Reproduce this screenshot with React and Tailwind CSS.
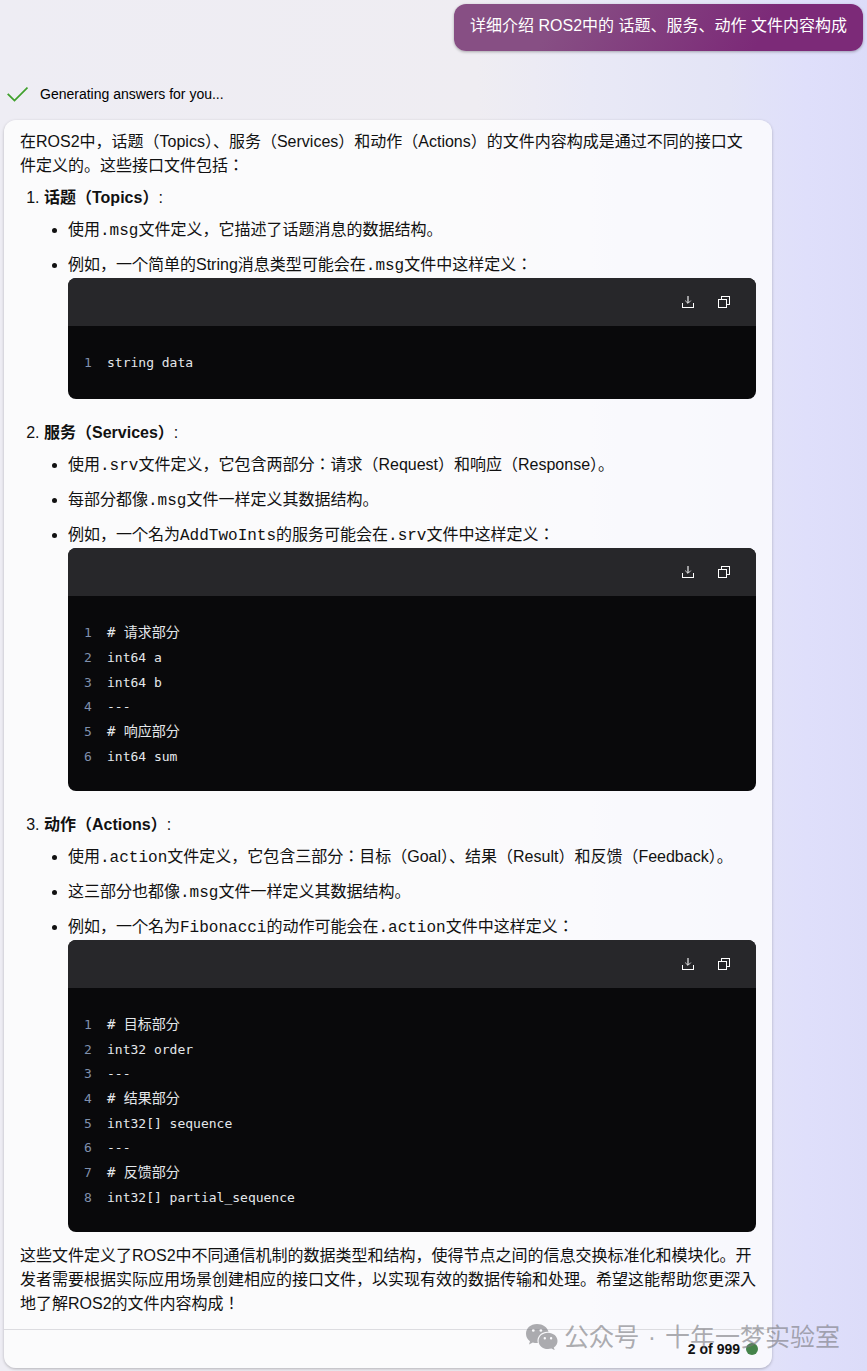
import React from 'react';

const sections = [
  {
    title: '话题（Topics）',
    items: [
      ['使用', '.msg', '文件定义，它描述了话题消息的数据结构。'],
      ['例如，一个简单的String消息类型可能会在', '.msg', '文件中这样定义：'],
    ],
    lines: ['string data'],
  },
  {
    title: '服务（Services）',
    items: [
      ['使用', '.srv', '文件定义，它包含两部分：请求（Request）和响应（Response）。'],
      ['每部分都像', '.msg', '文件一样定义其数据结构。'],
      ['例如，一个名为', 'AddTwoInts', '的服务可能会在', '.srv', '文件中这样定义：'],
    ],
    lines: ['# 请求部分', 'int64 a', 'int64 b', '---', '# 响应部分', 'int64 sum'],
  },
  {
    title: '动作（Actions）',
    items: [
      ['使用', '.action', '文件定义，它包含三部分：目标（Goal）、结果（Result）和反馈（Feedback）。'],
      ['这三部分也都像', '.msg', '文件一样定义其数据结构。'],
      ['例如，一个名为', 'Fibonacci', '的动作可能会在', '.action', '文件中这样定义：'],
    ],
    lines: [
      '# 目标部分',
      'int32 order',
      '---',
      '# 结果部分',
      'int32[] sequence',
      '---',
      '# 反馈部分',
      'int32[] partial_sequence',
    ],
  },
];

const lineClass = (line) => {
  if (line.startsWith('#')) return 'text-[14px] leading-[25px]';
  if (line === '---') return 'text-[13px] leading-[24px]';
  return 'text-[13px] leading-[25px]';
};

function DownloadIcon() {
  return (
    <svg width="12" height="12" viewBox="0 0 12 12" fill="none" stroke="currentColor" shapeRendering="crispEdges">
      <path d="M0.5 7V11.5H11.5V7" />
      <path d="M6 0V7" strokeWidth="2" opacity="0.55" />
      <path d="M3.2 4.6L6 7.4L8.8 4.6" shapeRendering="auto" opacity="0.8" />
    </svg>
  );
}

function CopyIcon() {
  return (
    <svg width="12" height="12" viewBox="0 0 12 12" fill="none" stroke="currentColor" shapeRendering="crispEdges">
      <path d="M0.5 3.5H8.5V11.5H0.5Z" />
      <path d="M3.5 3.5V0.5H11.5V8.5H8.5" />
    </svg>
  );
}

function CodeBlock({ lines }) {
  return (
    <div className="rounded-lg overflow-hidden bg-[#09090b] text-[#e4e7ea]">
      <div className="flex items-center justify-end h-12 px-3.5 bg-[#27272a] text-white">
        <button className="flex items-center justify-center w-9 h-9 cursor-pointer" aria-label="Download">
          <DownloadIcon />
        </button>
        <button className="flex items-center justify-center w-9 h-9 cursor-pointer" aria-label="Copy">
          <CopyIcon />
        </button>
      </div>
      <pre className="min-h-[73px] px-4 pt-6 pb-[22px] font-['DejaVu_Sans_Mono','Noto_Sans_CJK_JP',monospace]">
        {lines.map((line, i) => (
          <div key={i} className={`flex gap-[15px] ${lineClass(line)}`}>
            <span className="w-2 text-[13px] text-[#8090ad] select-none">{i + 1}</span>
            <code className="font-['DejaVu_Sans_Mono','Noto_Sans_CJK_JP',monospace]">{line}</code>
          </div>
        ))}
      </pre>
    </div>
  );
}

function RichText({ parts }) {
  // odd entries are inline code
  return (
    <p className="leading-6">
      {parts.map((part, i) =>
        i % 2 ? (
          <code key={i} className="text-[16px] leading-none font-['Liberation_Mono',monospace]">
            {part}
          </code>
        ) : (
          part
        )
      )}
    </p>
  );
}

function Section({ title, items, lines }) {
  return (
    <li>
      <p className="leading-6">
        <strong className="font-bold">{title}</strong>:
      </p>
      <ul className="list-disc pl-6 mt-2">
        {items.map((parts, i) => (
          <li key={i} className={i < items.length - 1 ? 'mb-[11px]' : ''}>
            <RichText parts={parts} />
            {i === items.length - 1 && (
              <div className="mt-px">
                <CodeBlock lines={lines} />
              </div>
            )}
          </li>
        ))}
      </ul>
    </li>
  );
}

function Watermark() {
  return (
    <div className="absolute right-[27px] bottom-4 flex items-center gap-1.5 text-[25px] leading-9 text-[#77777c]/60 pointer-events-none">
      <svg width="32" height="26" viewBox="1 1 32 26" fill="currentColor" fillRule="evenodd">
        <path d="M12 1C5.400 1 1 5.400 1 10.800c0 3 1.500 5.600 4 7.400l-1 3.300 3.800-2c1.300.4 2.800.6 4.200.6h.8c-1.600-5.800 3-11.300 9.700-11.300h1C22.400 4.200 17.800 1 12 1ZM8.300 6a1.400 1.400 0 1 1 0 2.800 1.400 1.400 0 0 1 0-2.800Zm7.600 0a1.400 1.400 0 1 1 0 2.800 1.400 1.400 0 0 1 0-2.800Z" />
        <path d="M23 9.800c-5.400 0-9.400 3.600-9.400 8.100s4 8.100 9.400 8.100c1.200 0 2.400-.2 3.500-.5l3.200 1.700-.9-2.800c2.300-1.600 3.700-3.900 3.700-6.500 0-4.500-4.200-8.100-9.500-8.100Zm-3.200 4.300a1.200 1.200 0 1 1 0 2.400 1.200 1.200 0 0 1 0-2.400Zm6.300 0a1.200 1.200 0 1 1 0 2.400 1.200 1.200 0 0 1 0-2.400Z" />
      </svg>
      <span>公众号</span>
      <span className="w-3.5 text-center">·</span>
      <span>十年一梦实验室</span>
    </div>
  );
}

export default function App() {
  return (
    <div className="relative min-h-screen p-1 pb-[3px] bg-[linear-gradient(90deg,#eeedf4_0%,#efedf2_55%,#e9e9f6_68%,#e3e4f6_84%,#dfdffb_93%,#dcdcf9_100%)] text-base text-[#111111] font-['Liberation_Sans','Noto_Sans_CJK_JP',sans-serif]">
      <div className="flex justify-end">
        <div className="px-4 pt-2.5 pb-[13px] leading-6 rounded-xl text-white bg-[linear-gradient(120deg,#874f84_25%,#7c2a78_75%)] shadow-[0_1px_3px_rgba(0,0,0,0.3)]">
          详细介绍 ROS2中的 话题、服务、动作 文件内容构成
        </div>
      </div>

      <div className="flex items-center gap-3 mt-8 h-[22px] pl-[3px] text-sm text-black">
        <svg width="21" height="16" viewBox="0 0 21 16" fill="none" stroke="#3fa02c" strokeWidth="1.8">
          <path d="M0.700 7.800L7.500 14.600L20.500 1.600" />
        </svg>
        <span>Generating answers for you...</span>
      </div>

      <div className="mt-[15px] mr-[91px] rounded-xl bg-white/75 shadow-[0_1px_3px_rgba(0,0,0,0.25)]">
        <div className="px-4 pt-2.5 pb-[13px]">
          <p className="leading-6">
            在ROS2中，话题（Topics）、服务（Services）和动作（Actions）的文件内容构成是通过不同的接口文件定义的。这些接口文件包括：
          </p>
          <ol className="list-decimal pl-6 mt-2 space-y-[22px]">
            {sections.map((s) => (
              <Section key={s.title} {...s} />
            ))}
          </ol>
          <p className="leading-6 mt-3">
            这些文件定义了ROS2中不同通信机制的数据类型和结构，使得节点之间的信息交换标准化和模块化。开发者需要根据实际应用场景创建相应的接口文件，以实现有效的数据传输和处理。希望这能帮助您更深入地了解ROS2的文件内容构成！
          </p>
        </div>
        <div className="flex items-center justify-end gap-1.5 h-[39px] pr-3.5 border-t border-[#dcdce0] text-sm font-bold">
          <span>2 of 999</span>
          <span className="w-3 h-3 rounded-full bg-[#44834a]"></span>
        </div>
      </div>

      <Watermark />
    </div>
  );
}
